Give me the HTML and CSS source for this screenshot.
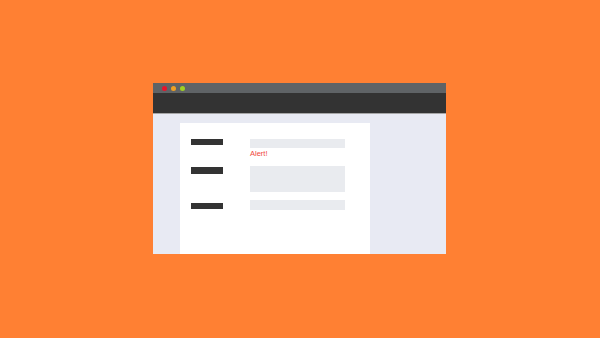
FILE: index.html
```html
<!DOCTYPE html>
<html>
<head>
<meta charset="utf-8">
<link rel="stylesheet" href="styles.css">
</head>
<body>
<div class="stage">
  <div class="window">
    <div class="titlebar">
      <span class="dot red"></span>
      <span class="dot orange"></span>
      <span class="dot green"></span>
    </div>
    <div class="toolbar"></div>
    <div class="content">
      <div class="card">
        <div class="row row1">
          <div class="label l1"></div>
          <div class="field">
            <div class="input"></div>
            <div class="alert">Alert!</div>
          </div>
        </div>
        <div class="row row2">
          <div class="label l2"></div>
          <div class="field">
            <div class="textarea"></div>
          </div>
        </div>
        <div class="row row3">
          <div class="label l3"></div>
          <div class="field">
            <div class="input tall"></div>
          </div>
        </div>
      </div>
    </div>
  </div>
</div>
</body>
</html>
```
FILE: styles.css
```css
html, body {
  margin: 0;
  padding: 0;
}
body {
  background: #ff8033;
  font-family: "Liberation Sans", Arial, sans-serif;
}
.stage {
  width: 600px;
  height: 338px;
  box-sizing: border-box;
  padding: 83px 0 0 153px;
  display: flex;
  align-items: flex-start;
}
.window {
  width: 293px;
  height: 171px;
  display: flex;
  flex-direction: column;
}
.titlebar {
  height: 10px;
  background: #5f6366;
  display: flex;
  align-items: center;
  gap: 4px;
  padding-left: 9px;
}
.dot {
  width: 5px;
  height: 5px;
  border-radius: 50%;
}
.red { background: #e8132a; }
.orange { background: #f0a023; }
.green { background: #9fd022; }
.toolbar {
  height: 20px;
  background: #333333;
  border-bottom: 1px solid #a6a6a6;
}
.content {
  flex: 1;
  background: #e8eaf3;
  padding: 9px 0 0 27px;
  display: flex;
}
.card {
  width: 190px;
  background: #ffffff;
  padding: 16px 0 0 11px;
  box-sizing: border-box;
  display: flex;
  flex-direction: column;
}
.row {
  display: flex;
  align-items: flex-start;
  gap: 27px;
}
.row2 { margin-top: 7px; }
.row3 { margin-top: 8px; }
.label {
  width: 32px;
  height: 6px;
  background: #333333;
}
.l2 { margin-top: 1px; height: 7px; }
.l3 { margin-top: 3px; }
.field {
  width: 95px;
}
.input {
  height: 9px;
  background: #e9ebef;
}
.input.tall { height: 10px; }
.textarea {
  height: 26px;
  background: #e9ebef;
}
.alert {
  color: #f0473d;
  font-size: 7.5px;
  line-height: 10px;
  margin-top: 1px;
}
```
